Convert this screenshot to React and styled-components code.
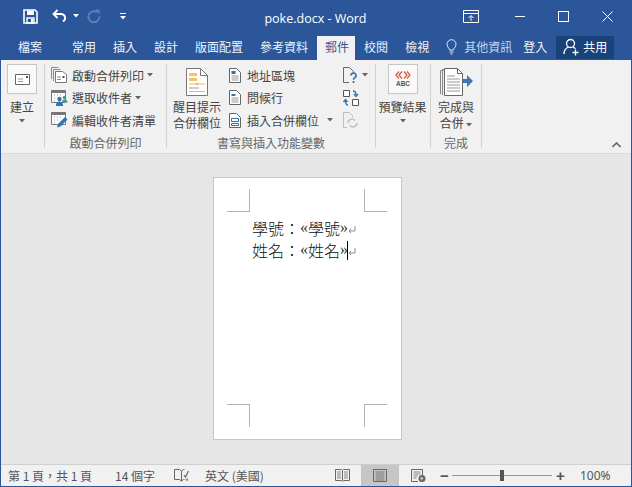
import React from "react";
import styled, { createGlobalStyle } from "styled-components";

const GlobalStyle = createGlobalStyle`
  html, body {
    margin: 0;
    padding: 0;
    overflow: hidden;
  }
  body {
    font-family: "Noto Sans CJK TC", "Noto Sans", sans-serif;
  }
`;

const BLUE = "#2b579a";

function Caret({ color = "#666" }) {
  return (
    <CaretSvg viewBox="0 0 6 4" width="6" height="4">
      <path d="M0 0h6L3 3.5z" fill={color} />
    </CaretSvg>
  );
}

function SaveIcon() {
  return (
    <svg width="15" height="15" viewBox="0 0 15 15">
      <path d="M1 1h11l2 2v11H1z" fill="none" stroke="#fff" strokeWidth="1.6" />
      <path d="M4 1.5h7v4.5H4z" fill="#fff" />
      <path d="M4 9h7v5H4z" fill="none" stroke="#fff" strokeWidth="1.4" />
      <path d="M8 10h2v3H8z" fill="#fff" />
    </svg>
  );
}

function UndoIcon() {
  return (
    <svg width="15" height="14" viewBox="0 0 15 14">
      <path d="M2 5h7.5a4 4 0 0 1 1.5 7.5" fill="none" stroke="#fff" strokeWidth="1.8" />
      <path d="M5.5 1L1.5 5l4 4" fill="none" stroke="#fff" strokeWidth="1.8" />
    </svg>
  );
}

function RedoIcon() {
  return (
    <svg width="14" height="14" viewBox="0 0 14 14">
      <path d="M10 3.2a5.5 5.5 0 1 0 2.4 4.3" fill="none" stroke="#5f82b5" strokeWidth="1.8" />
      <path d="M8 0.5h4.5V5z" fill="#5f82b5" />
    </svg>
  );
}

function CustomizeIcon() {
  return (
    <svg width="6" height="7" viewBox="0 0 6 7">
      <path d="M0 0h6v1H0z M0 3h6L3 6.5z" fill="#fff" />
    </svg>
  );
}

function RibbonDisplayIcon() {
  return (
    <svg width="16" height="13" viewBox="0 0 16 13">
      <path d="M.5 .5h15v12H.5z M.5 3.500h15" fill="none" stroke="#fff" />
      <path d="M8 11V6M5.500 8L8 5.500 10.500 8" fill="none" stroke="#fff" />
    </svg>
  );
}

function BulbIcon() {
  return (
    <svg width="11" height="16" viewBox="0 0 11 16">
      <path
        d="M3.500 11C3 8.500 1 8 1 5.200a4.500 4.500 0 0 1 9 0C10 8 8 8.500 7.500 11z M3.500 13h4M4.500 15h2"
        fill="none"
        stroke="#e4ecf6"
      />
    </svg>
  );
}

function ShareIcon() {
  return (
    <svg width="17" height="18" viewBox="0 0 17 18">
      <circle cx="7.500" cy="5.500" r="4" fill="none" stroke="#fff" strokeWidth="1.3" />
      <path d="M1 16c0-4 2-6 4.500-7M10 9c1 .4 1.700 1 2.400 2" fill="none" stroke="#fff" strokeWidth="1.3" />
      <path d="M12.500 11.500v6M9.500 14.500h6" stroke="#fff" strokeWidth="1.3" />
    </svg>
  );
}

function EnvelopeIcon() {
  return (
    <svg width="15" height="11" viewBox="0 0 15 11">
      <path d="M.5 .5h14v10H.5z" fill="#fff" stroke="#666" />
      <path d="M3 5h5M3 7.500h5" stroke="#999" />
      <path d="M11 2h2v2h-2z" fill="#2b579a" />
    </svg>
  );
}

function StartMergeIcon() {
  return (
    <svg width="16" height="16" viewBox="0 0 16 16">
      <path d="M.5 12V.5h7M2.500 14V2.500h7" fill="none" stroke="#8a8a8a" />
      <path d="M4.500 4.500h7l4 3v8h-11z" fill="#fff" stroke="#777" />
      <path d="M6 10h4M6 12.500h4" stroke="#8a8a8a" />
      <path d="M11.500 9h2v2h-2z" fill="#2b579a" />
    </svg>
  );
}

function RecipientsIcon() {
  return (
    <svg width="17" height="16" viewBox="0 0 17 16">
      <path d="M.5 .5h14v12H.5z" fill="#fff" stroke="#777" />
      <path d="M.5 .5h14v2.500H.5z" fill="#777" />
      <path d="M3 5h1M6 5h1M9 5h1M3 8h1M3 11h1" stroke="#999" />
      <circle cx="8.500" cy="9" r="2.200" fill="#2e75b6" />
      <path d="M5 16c0-3.500 1.500-4.500 3.500-4.500S12 12.500 12 16z" fill="#2e75b6" />
      <circle cx="13.500" cy="7.500" r="1.800" fill="#4e9a7f" />
      <path d="M11 12.500c0-2.500 1-3.200 2.500-3.200s3 .7 3 3.200z" fill="#4e9a7f" />
    </svg>
  );
}

function EditListIcon() {
  return (
    <svg width="17" height="16" viewBox="0 0 17 16">
      <path d="M.5 .5h14v12H.5z" fill="#fff" stroke="#777" />
      <path d="M.5 .5h14v2.500H.5z" fill="#777" />
      <path d="M3 5h1M6 5h1M9 5h1M3 8h1M6 8h1M3 11h1" stroke="#999" />
      <path d="M6 15.500l1-3.500 7-7 2.500 2.500-7 7z" fill="#2e75b6" />
    </svg>
  );
}

function HighlightIcon() {
  return (
    <svg width="22" height="28" viewBox="0 0 22 28">
      <path d="M.5 .5h14l7 7v20H.5z" fill="#fff" stroke="#777" />
      <path d="M14.500 .5v7h7" fill="none" stroke="#777" />
      <path d="M3 5h8v3H3zM3 10h8v3H3z" fill="#f2c46d" />
      <path d="M3 16h7M12 16h7" stroke="#f0b94e" />
      <path d="M10 16h2" stroke="#777" />
      <path d="M3 20h5M8 20h5" stroke="#999" />
      <path d="M3 23.500h16" stroke="#f0b94e" />
    </svg>
  );
}

function SmallDocIcon({ variant }) {
  return (
    <svg width="12" height="15" viewBox="0 0 12 15">
      <path d="M.5 .5h7l4 4v10H.5z" fill="#fff" stroke="#666" />
      {variant === "address" && <path d="M2.500 3h4v3h-4z" fill="#2e75b6" />}
      {variant === "address" && <path d="M2.500 8h7M2.500 10h7M2.500 12h7" stroke="#999" />}
      {variant === "greeting" && <path d="M2.500 4h4v2h-4z" fill="#2e75b6" />}
      {variant === "greeting" && <path d="M2.500 8h7M2.500 10h7M2.500 12h7" stroke="#999" />}
      {variant === "field" && <path d="M2.500 5.500h7v3h-7zM2.500 10.500h7v2h-7z" fill="none" stroke="#2e75b6" />}
    </svg>
  );
}

function RulesIcon() {
  return (
    <svg width="15" height="17" viewBox="0 0 15 17">
      <path d="M6 15.500H.5V.5h6l4 4v2" fill="none" stroke="#666" />
      <path d="M8 8.500a2.500 2.500 0 1 1 3.700 2.200c-.9.500-1.200 1-1.200 2.100M10.500 14v2" fill="none" stroke="#2e75b6" strokeWidth="1.700" />
    </svg>
  );
}

function MatchIcon() {
  return (
    <svg width="16" height="16" viewBox="0 0 16 16">
      <path d="M.5 .5h6v6h-6zM9.500 9.500h6v6h-6z" fill="#fff" stroke="#555" />
      <path d="M10 1c2 0 3 1 3 4M11 4l2 2.500L15 4" fill="none" stroke="#2e75b6" strokeWidth="1.300" />
      <path d="M5 15c-2 0-2.500-2-2.500-4.500M.5 12l2-2.500 2 2.500" fill="none" stroke="#2e75b6" strokeWidth="1.300" />
    </svg>
  );
}

function RefreshDocIcon() {
  return (
    <svg width="15" height="16" viewBox="0 0 15 16">
      <path d="M4 15.500H.5V.5h6l3 3v2" fill="none" stroke="#bdbdbd" />
      <path d="M5 11a4 4 0 0 1 7-2.500M14 11a4 4 0 0 1-7 2.500" fill="none" stroke="#bdbdbd" strokeWidth="1.400" />
    </svg>
  );
}

function PreviewIcon() {
  return (
    <svg width="16" height="16" viewBox="0 0 16 16">
      <path d="M4 .5L1 4l3 3.500M7 .5L4 4l3 3.500M9 .5L12 4 9 7.500M12 .5L15 4l-3 3.500" fill="none" stroke="#d9573a" strokeWidth="1.200" />
      <text x="8" y="15" textAnchor="middle" fontSize="6.500" fontWeight="700" fill="#555" fontFamily="Liberation Sans">ABC</text>
    </svg>
  );
}

function FinishIcon() {
  return (
    <svg width="33" height="28" viewBox="0 0 33 28">
      <path d="M.5 26V2.500h3M2.500 27V1.500h4" fill="none" stroke="#888" />
      <path d="M4.500 27.500V.5h13l4 4 1 1v22z" fill="#fff" stroke="#666" />
      <path d="M17.500 .5v5h5" fill="none" stroke="#666" />
      <path d="M7 8h8M7 11h13M7 14h13M7 17h13M7 20h13M7 23h13" stroke="#999" />
      <path d="M23 11h4V7l6 6-6 6v-4h-4z" fill="#3f78b5" />
    </svg>
  );
}

function ProofIcon() {
  return (
    <svg width="15" height="14" viewBox="0 0 15 14">
      <path d="M.5 .5h5l2 1.500v10l-2-1.500h-5zM7.500 2l2-1.500h1M7.500 12l2-1.500h1" fill="none" stroke="#666" />
      <path d="M10 6l1.500 2L14.500 2" fill="none" stroke="#666" strokeWidth="1.200" />
      <path d="M11 11l3-2v3z" fill="#888" />
    </svg>
  );
}

function ReadIcon() {
  return (
    <svg width="15" height="13" viewBox="0 0 15 13">
      <path d="M.5 .5h6l1 1 1-1h6v11h-6l-1 1-1-1h-6zM7.500 1.500v10" fill="none" stroke="#666" />
      <path d="M2 3h4M2 5h4M2 7h4M2 9h4M9 3h4M9 5h4M9 7h4M9 9h4" stroke="#888" />
    </svg>
  );
}

function PrintLayoutIcon() {
  return (
    <svg width="14" height="13" viewBox="0 0 14 13">
      <path d="M.5 .5h13v12H.5z" fill="none" stroke="#666" />
      <path d="M2.500 3h9M2.500 5h9M2.500 7h9M2.500 9h9M2.500 11h9" stroke="#777" />
    </svg>
  );
}

function WebLayoutIcon() {
  return (
    <svg width="15" height="13" viewBox="0 0 15 13">
      <path d="M7 12.500H.5V.5h11V6" fill="none" stroke="#666" />
      <path d="M2.500 3h7M2.500 5h7M2.500 7h4M2.500 9h3" stroke="#888" />
      <circle cx="11" cy="9.500" r="3.500" fill="#666" />
      <path d="M9 8.500h3v2h-2z" fill="#d8d8d8" />
    </svg>
  );
}

function ReturnMark() {
  return (
    <ReturnSvg viewBox="0 0 8 8" width="8" height="8">
      <path d="M7 0v5H1M3 3L1 5l2 2" fill="none" stroke="#8a8a8a" />
    </ReturnSvg>
  );
}

export default function App() {
  return (
    <Window>
      <GlobalStyle />
      <TitleBar>
        <QuickAccess>
          <SaveIcon />
          <UndoGroup>
            <UndoIcon />
            <Caret color="#fff" />
          </UndoGroup>
          <RedoSlot>
            <RedoIcon />
          </RedoSlot>
          <CustomizeIcon />
        </QuickAccess>
        <DocTitle>poke.docx - Word</DocTitle>
        <WindowControls>
          <DisplaySlot>
            <RibbonDisplayIcon />
          </DisplaySlot>
          <MinimizeGlyph />
          <MaximizeGlyph />
          <CloseGlyph viewBox="0 0 11 11">
            <path d="M.5 .5l10 10M10.500 .5l-10 10" stroke="#fff" fill="none" />
          </CloseGlyph>
        </WindowControls>
      </TitleBar>

      <TabBar>
        <FileTab>檔案</FileTab>
        <Tab>常用</Tab>
        <Tab>插入</Tab>
        <Tab>設計</Tab>
        <Tab>版面配置</Tab>
        <Tab>參考資料</Tab>
        <Tab $active>郵件</Tab>
        <Tab>校閱</Tab>
        <Tab>檢視</Tab>
        <TellMe>
          <BulbIcon />
          <TellMeText>其他資訊</TellMeText>
        </TellMe>
        <SignIn>登入</SignIn>
        <ShareButton>
          <ShareIcon />
          共用
        </ShareButton>
      </TabBar>

      <Ribbon>
        <Group $width={44}>
          <GroupBody>
            <LargeColumn>
              <BoxedButton>
                <EnvelopeIcon />
              </BoxedButton>
              <LargeLabel>建立</LargeLabel>
              <CaretLine>
                <Caret />
              </CaretLine>
            </LargeColumn>
          </GroupBody>
        </Group>

        <Group $width={122}>
          <GroupBody>
            <RowStack>
              <RibbonRow>
                <RowIcon>
                  <StartMergeIcon />
                </RowIcon>
                啟動合併列印
                <Caret />
              </RibbonRow>
              <RibbonRow>
                <RowIcon>
                  <RecipientsIcon />
                </RowIcon>
                選取收件者
                <Caret />
              </RibbonRow>
              <RibbonRow>
                <RowIcon>
                  <EditListIcon />
                </RowIcon>
                編輯收件者清單
              </RibbonRow>
            </RowStack>
          </GroupBody>
          <GroupLabel>啟動合併列印</GroupLabel>
        </Group>

        <Group $width={209}>
          <GroupBody>
            <HighlightColumn>
              <LargeIconSlot>
                <HighlightIcon />
              </LargeIconSlot>
              <TwoLineLabel>
                醒目提示
                <br />
                合併欄位
              </TwoLineLabel>
            </HighlightColumn>
            <FieldStack>
              <FieldRow>
                <SmallDocIcon variant="address" />
                地址區塊
              </FieldRow>
              <FieldRow>
                <SmallDocIcon variant="greeting" />
                問候行
              </FieldRow>
              <FieldRow>
                <SmallDocIcon variant="field" />
                插入合併欄位
                <FieldCaret>
                  <Caret />
                </FieldCaret>
              </FieldRow>
            </FieldStack>
            <ToolStack>
              <ToolRow>
                <RulesIcon />
                <Caret />
              </ToolRow>
              <ToolRow>
                <MatchIcon />
              </ToolRow>
              <ToolRow>
                <RefreshDocIcon />
              </ToolRow>
            </ToolStack>
          </GroupBody>
          <GroupLabel>書寫與插入功能變數</GroupLabel>
        </Group>

        <Group $width={55}>
          <GroupBody>
            <LargeColumn>
              <BoxedButton>
                <PreviewIcon />
              </BoxedButton>
              <LargeLabel>預覽結果</LargeLabel>
              <CaretLine>
                <Caret />
              </CaretLine>
            </LargeColumn>
          </GroupBody>
        </Group>

        <Group $width={51}>
          <GroupBody>
            <FinishColumn>
              <LargeIconSlot>
                <FinishIcon />
              </LargeIconSlot>
              <TwoLineLabel>
                完成與
                <br />
                合併 <Caret />
              </TwoLineLabel>
            </FinishColumn>
          </GroupBody>
          <GroupLabel>完成</GroupLabel>
        </Group>

        <CollapseArrow viewBox="0 0 9 6">
          <path d="M.5 5l4-4 4 4" fill="none" stroke="#666" strokeWidth="1.600" />
        </CollapseArrow>
      </Ribbon>

      <DocArea>
        <Page>
          <CropMark $top $left />
          <CropMark $top />
          <CropMark $left />
          <CropMark />
          <DocLine>
            學號：<Chevron>«</Chevron>學號<Chevron>»</Chevron>
            <ReturnMark />
          </DocLine>
          <DocLine>
            姓名：<Chevron>«</Chevron>姓名<Chevron>»</Chevron>
            <TextCursor />
            <ReturnMark />
          </DocLine>
        </Page>
      </DocArea>

      <StatusBar>
        <StatusLeft>
          <PageCount>第 1 頁，共 1 頁</PageCount>
          <StatusText>14 個字</StatusText>
          <ProofSlot>
            <ProofIcon />
          </ProofSlot>
          <StatusText>英文 (美國)</StatusText>
        </StatusLeft>
        <StatusRight>
          <ViewButton>
            <ReadIcon />
          </ViewButton>
          <ViewButton $active>
            <PrintLayoutIcon />
          </ViewButton>
          <ViewButton>
            <WebLayoutIcon />
          </ViewButton>
          <ZoomControl>
            <ZoomSign>−</ZoomSign>
            <ZoomTrack>
              <ZoomThumb />
            </ZoomTrack>
            <ZoomSign>+</ZoomSign>
          </ZoomControl>
          <ZoomValue>100%</ZoomValue>
        </StatusRight>
      </StatusBar>
    </Window>
  );
}

const Window = styled.div`
  width: 632px;
  height: 487px;
  box-sizing: border-box;
  border: 1px solid ${BLUE};
  border-top: 0;
  display: flex;
  flex-direction: column;
  overflow: hidden;
  background: #e6e6e6;
`;

const TitleBar = styled.div`
  height: 36px;
  background: ${BLUE};
  display: grid;
  grid-template-columns: 1fr auto 1fr;
  align-items: center;
  color: #fff;
`;

const QuickAccess = styled.div`
  display: flex;
  align-items: center;
  padding-left: 22px;
  gap: 14px;
  margin-top: -4px;
`;

const UndoGroup = styled.div`
  display: flex;
  align-items: center;
  gap: 6px;
`;

const RedoSlot = styled.span`
  display: flex;
  margin: 0 5px 0 -6px;
`;

const DocTitle = styled.div`
  font-family: "Open Sans", sans-serif;
  font-size: 12.5px;
  margin: 1px 1px 0 0;
`;

const WindowControls = styled.div`
  display: flex;
  align-items: center;
  justify-content: flex-end;
  padding-right: 18px;
  gap: 33px;
  margin-top: -4px;
`;

const DisplaySlot = styled.span`
  display: flex;
  margin-right: 3px;
`;

const MinimizeGlyph = styled.span`
  width: 10px;
  height: 1px;
  background: #fff;
`;

const MaximizeGlyph = styled.span`
  width: 9px;
  height: 9px;
  border: 1px solid #fff;
`;

const CloseGlyph = styled.svg`
  width: 11px;
  height: 11px;
`;

const TabBar = styled.div`
  height: 24px;
  background: ${BLUE};
  display: flex;
  align-items: stretch;
  font-size: 12px;
  color: #f0f4fa;
`;

const Tab = styled.div`
  display: flex;
  align-items: center;
  padding: 0 ${(p) => (p.$active ? "6px" : "8px")} 3px 8px;
  margin-right: 1px;
  background: ${(p) => (p.$active ? "#f1f1f1" : "transparent")};
  color: ${(p) => (p.$active ? BLUE : "inherit")};
`;

const FileTab = styled(Tab)`
  margin-left: 9px;
  margin-right: 14px;
`;

const TellMe = styled.div`
  display: flex;
  align-items: center;
  gap: 7px;
  margin-left: 8px;
  padding-bottom: 3px;
`;

const TellMeText = styled.span`
  color: #c8d6ea;
`;

const SignIn = styled.div`
  display: flex;
  align-items: center;
  margin-left: 11px;
  padding-bottom: 3px;
`;

const ShareButton = styled.div`
  width: 58px;
  height: 23px;
  box-sizing: border-box;
  margin-left: 9px;
  display: flex;
  align-items: center;
  gap: 3px;
  padding: 0 0 2px 7px;
  background: #17427a;
  color: #fff;
`;

const Ribbon = styled.div`
  height: 94px;
  box-sizing: border-box;
  background: #f1f1f1;
  border-bottom: 1px solid #dadada;
  display: flex;
  position: relative;
  font-size: 12px;
  color: #444;
`;

const Group = styled.div`
  width: ${(p) => p.$width}px;
  box-sizing: border-box;
  height: 84px;
  margin-top: 4px;
  border-right: 1px solid #d2d2d2;
  display: flex;
  flex-direction: column;
`;

const GroupBody = styled.div`
  flex: 1;
  display: flex;
  min-height: 0;
`;

const GroupLabel = styled.div`
  height: 12px;
  line-height: 14px;
  text-align: center;
  color: #666;
  white-space: nowrap;
`;

const LargeColumn = styled.div`
  flex: 1;
  display: flex;
  flex-direction: column;
  align-items: center;
  padding-right: 1px;
`;

const BoxedButton = styled.div`
  width: 30px;
  height: 30px;
  box-sizing: border-box;
  border: 1px solid #c6c6c6;
  background: #f9f9f9;
  display: flex;
  align-items: center;
  justify-content: center;
`;

const LargeLabel = styled.div`
  margin-top: 4px;
  line-height: 18px;
  white-space: nowrap;
`;

const CaretLine = styled.div`
  height: 10px;
  display: flex;
  align-items: center;
  justify-content: center;
`;

const CaretSvg = styled.svg`
  flex: none;
  vertical-align: middle;
`;

const RowStack = styled.div`
  display: flex;
  flex-direction: column;
  padding-left: 6px;
  gap: 0.5px;
  white-space: nowrap;
`;

const RibbonRow = styled.div`
  display: flex;
  align-items: center;
  height: 22px;
  gap: 3px;
`;

const RowIcon = styled.span`
  width: 17px;
  margin-right: 1px;
  display: flex;
`;

const HighlightColumn = styled.div`
  width: 58px;
  display: flex;
  flex-direction: column;
  align-items: center;
  padding-left: 1px;
`;

const FinishColumn = styled(HighlightColumn)`
  width: 100%;
  padding-left: 0;
`;

const LargeIconSlot = styled.div`
  height: 28px;
  margin-top: 4px;
`;

const TwoLineLabel = styled.div`
  margin-top: 3px;
  line-height: 16px;
  text-align: center;
  white-space: nowrap;
`;

const FieldStack = styled.div`
  width: 114px;
  display: flex;
  flex-direction: column;
  padding-left: 3px;
  gap: 0.5px;
  white-space: nowrap;
`;

const FieldRow = styled.div`
  display: flex;
  align-items: center;
  height: 22px;
  gap: 6px;
`;

const FieldCaret = styled.span`
  display: flex;
  margin-left: 2px;
`;

const ToolStack = styled.div`
  display: flex;
  flex-direction: column;
  gap: 0.5px;
`;

const ToolRow = styled.div`
  display: flex;
  align-items: center;
  height: 22px;
  gap: 4px;
`;

const CollapseArrow = styled.svg`
  position: absolute;
  right: 10px;
  bottom: 5px;
  width: 9px;
  height: 6px;
`;

const DocArea = styled.div`
  flex: 1;
  min-height: 0;
  padding: 23px 17px 0 0;
  display: flex;
  justify-content: center;
  align-items: flex-start;
  background: #e6e6e6;
`;

const Page = styled.div`
  position: relative;
  width: 189px;
  height: 263px;
  box-sizing: border-box;
  padding: 39px 0 0 38px;
  background: #fff;
  border: 1px solid #c6c6c6;
`;

const CropMark = styled.span`
  position: absolute;
  width: 23px;
  height: 23px;
  box-sizing: border-box;
  ${(p) => (p.$left ? "left: 13px;" : "right: 14px;")}
  ${(p) => (p.$top ? "top: 11px;" : "bottom: 12px;")}
  border-color: #b4b4b4;
  border-style: solid;
  border-width: 0;
  ${(p) => (p.$left ? "border-right-width: 1px;" : "border-left-width: 1px;")}
  ${(p) => (p.$top ? "border-bottom-width: 1px;" : "border-top-width: 1px;")}
`;

const DocLine = styled.div`
  font-size: 16px;
  font-weight: 300;
  line-height: 22px;
  color: #111;
  white-space: nowrap;
  display: flex;
  align-items: center;
`;

const Chevron = styled.span`
  font-family: "Liberation Serif", serif;
  font-size: 16px;
  color: #333;
`;

const ReturnSvg = styled.svg`
  margin-top: 3px;
`;

const TextCursor = styled.span`
  width: 1px;
  height: 19px;
  margin-left: -1px;
  background: #000;
`;

const StatusBar = styled.div`
  height: 22px;
  background: #f1f1f1;
  border-top: 1px solid #cfcfcf;
  box-sizing: border-box;
  display: flex;
  justify-content: space-between;
  align-items: stretch;
  font-size: 12px;
  color: #555;
`;

const StatusLeft = styled.div`
  display: flex;
  align-items: center;
  padding-left: 7px;
  gap: 20px;
`;

const StatusText = styled.span`
  white-space: nowrap;
`;

const PageCount = styled(StatusText)`
  margin-right: 3px;
`;

const ProofSlot = styled.span`
  display: flex;
  margin: 0 -4px 0 -1px;
`;

const StatusRight = styled.div`
  display: flex;
  align-items: stretch;
`;

const ViewButton = styled.div`
  width: 38px;
  display: flex;
  align-items: center;
  justify-content: center;
  background: ${(p) => (p.$active ? "#c6c6c6" : "transparent")};
`;

const ZoomControl = styled.div`
  display: flex;
  align-items: center;
  gap: 4px;
  margin-left: 3px;
`;

const ZoomSign = styled.span`
  width: 8px;
  text-align: center;
  font-family: "Liberation Sans", sans-serif;
  font-size: 15px;
  font-weight: 700;
  color: #555;
  line-height: 1;
`;

const ZoomTrack = styled.div`
  position: relative;
  width: 100px;
  height: 1px;
  background: #999;
`;

const ZoomThumb = styled.span`
  position: absolute;
  left: 48px;
  top: -5px;
  width: 4px;
  height: 11px;
  background: #555;
`;

const ZoomValue = styled.div`
  width: 67px;
  box-sizing: border-box;
  padding-left: 16px;
  display: flex;
  align-items: center;
  font-family: "Noto Sans", sans-serif;
`;
